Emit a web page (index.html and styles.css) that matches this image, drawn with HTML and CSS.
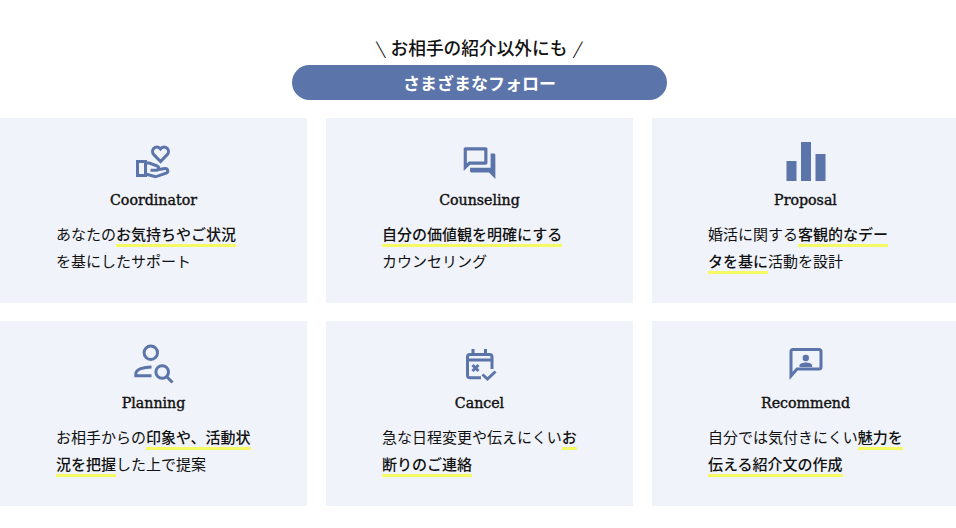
FILE: index.html
```html
<!DOCTYPE html>
<html lang="ja">
<head>
<meta charset="utf-8">
<title>さまざまなフォロー</title>
<link rel="stylesheet" href="styles.css">
</head>
<body>
<main class="page">
  <header class="head">
    <p class="lead"><span class="slash slash-l">\</span>お相手の紹介以外にも<span class="slash slash-r">/</span></p>
    <h1 class="pill">さまざまなフォロー</h1>
  </header>
  <section class="grid">
    <article class="card">
      <div class="icon"><svg class="line" viewBox="4 0 40 40" width="40" height="40"><path d="M30.500 19.500 23.800 12.600a4.400 4.400 0 0 1 0-6.200 4.400 4.400 0 0 1 6.200 0l.5.6.5-.6a4.400 4.400 0 0 1 6.200 0 4.400 4.400 0 0 1 0 6.200z"/><rect x="7.500" y="19.500" width="8" height="14"/><path d="M15.500 21h3.800l8 3a2.200 2.200 0 0 1-.8 4.200h-6"/><path d="M27 27.800l8-1.200c3-.2 3.800 3.400 1.200 4.500L25.500 34.800 15.500 32"/></svg></div>
      <h2 class="title">Coordinator</h2>
      <p class="text">あなたの<span class="mark">お気持ちやご状況</span><br>を基にしたサポート</p>
    </article>
    <article class="card">
      <div class="icon"><svg class="fill" viewBox="-0.33 -1.3 25.26 25.26" width="40" height="40"><path d="M15 4v7H5.170l-.59.59-.58.58V4h11m1-2H3c-.55 0-1 .45-1 1v14l4-4h10c.55 0 1-.45 1-1V3c0-.55-.45-1-1-1zm5 4h-2v9H6v2c0 .55.45 1 1 1h11l4 4V7c0-.55-.45-1-1-1z"/></svg></div>
      <h2 class="title">Counseling</h2>
      <p class="text"><span class="mark">自分の価値観を明確にする</span><br>カウンセリング</p>
    </article>
    <article class="card">
      <div class="icon"><svg class="fill" viewBox="0 0 40 40" width="40" height="40"><rect x="0.500" y="19" width="10" height="20"/><rect x="15" y="0" width="10" height="39"/><rect x="29.500" y="12" width="10" height="27"/></svg></div>
      <h2 class="title">Proposal</h2>
      <p class="text">婚活に関する<span class="mark">客観的なデー<br>タを基に</span>活動を設計</p>
    </article>
    <article class="card">
      <div class="icon"><svg class="line" viewBox="0 0 40 40" width="40" height="40"><circle cx="16.800" cy="7.800" r="6.700"/><path d="M17.500 22C10 22 1.800 24 1.800 29v1.800h15.700"/><circle cx="28.200" cy="27" r="6.300"/><path d="M32.800 31.800 38.500 37.500"/></svg></div>
      <h2 class="title">Planning</h2>
      <p class="text">お相手からの<span class="mark">印象や、活動状<br>況を把握</span>した上で提案</p>
    </article>
    <article class="card">
      <div class="icon"><svg class="line" viewBox="0 0 40 40" width="40" height="40"><path d="M21 32.800H10a2.500 2.500 0 0 1-2.500-2.500V12A2.500 2.500 0 0 1 10 9.500h19.500A2.500 2.500 0 0 1 32 12v12"/><path d="M7.500 15H32M13 4v6M25.500 4v6M12.500 20l6 6m0-6-6 6M22.500 29.500l5 4.500 8-7.500"/></svg></div>
      <h2 class="title">Cancel</h2>
      <p class="text">急な日程変更や伝えにくい<span class="mark">お<br>断りのご連絡</span></p>
    </article>
    <article class="card">
      <div class="icon"><svg class="line" viewBox="0 0 40 40" width="40" height="40"><path d="M5 6.500a2 2 0 0 1 2-2h26a2 2 0 0 1 2 2V22a2 2 0 0 1-2 2H11L5 31z"/><circle class="solid" cx="19.800" cy="13" r="3.200"/><path class="solid" d="M13.500 22v-1.500c0-2 3-3 6.300-3s6.300 1 6.300 3V22z"/></svg></div>
      <h2 class="title">Recommend</h2>
      <p class="text">自分では気付きにくい<span class="mark">魅力を<br>伝える紹介文の作成</span></p>
    </article>
  </section>
</main>
</body>
</html>
```

FILE: styles.css
```css
html, body {
  margin: 0;
  padding: 0;
  background: #fff;
  overflow: hidden;
}
.page {
  width: 959px;
  color: #111;
  font-family: "Noto Sans CJK JP", "Noto Sans", sans-serif;
}
.head {
  display: flex;
  flex-direction: column;
  align-items: center;
  padding-top: 34px;
}
.lead {
  margin: 0 0 5px;
  height: 26px;
  font-size: 17.700px;
  line-height: 26px;
  font-weight: 500;
}
.slash {
  display: inline-block;
  font-weight: 400;
  font-size: 17px;
  line-height: 1;
}
.slash-l {
  margin-right: 7px;
  transform: skewX(14deg);
}
.slash-r {
  margin-left: 8px;
  transform: skewX(-14deg);
}
.pill {
  margin: 0;
  width: 375px;
  height: 35px;
  border-radius: 18px;
  background: #5b74aa;
  color: #fff;
  font-size: 17px;
  line-height: 35px;
  font-weight: 700;
  text-align: center;
}
.grid {
  display: grid;
  grid-template-columns: repeat(3, 307px);
  grid-auto-rows: 185px;
  column-gap: 19px;
  row-gap: 18px;
  margin-top: 18px;
}
.card {
  background: #f0f3f9;
  padding-top: 24px;
  box-sizing: border-box;
}
.icon {
  display: flex;
  justify-content: center;
  height: 40px;
}
.icon svg {
  overflow: visible;
  display: block;
}
.line {
  fill: none;
  stroke: #5b74aa;
  stroke-width: 3;
}
.line .solid {
  fill: #5b74aa;
  stroke: none;
}
.fill {
  fill: #5b74aa;
}
.title {
  margin: 6px 0 8px;
  font-family: "DejaVu Serif", serif;
  font-size: 14.200px;
  line-height: 24px;
  font-weight: 400;
  -webkit-text-stroke: 0.4px #111;
  text-align: center;
}
.text {
  margin: 0;
  padding-left: 56px;
  font-size: 15px;
  line-height: 27px;
  font-weight: 400;
}
.mark {
  font-weight: 500;
  padding-bottom: 3px;
  background: linear-gradient(#f5fa62, #f5fa62) left bottom / 100% 3px no-repeat;
  -webkit-box-decoration-break: clone;
  box-decoration-break: clone;
}
```
